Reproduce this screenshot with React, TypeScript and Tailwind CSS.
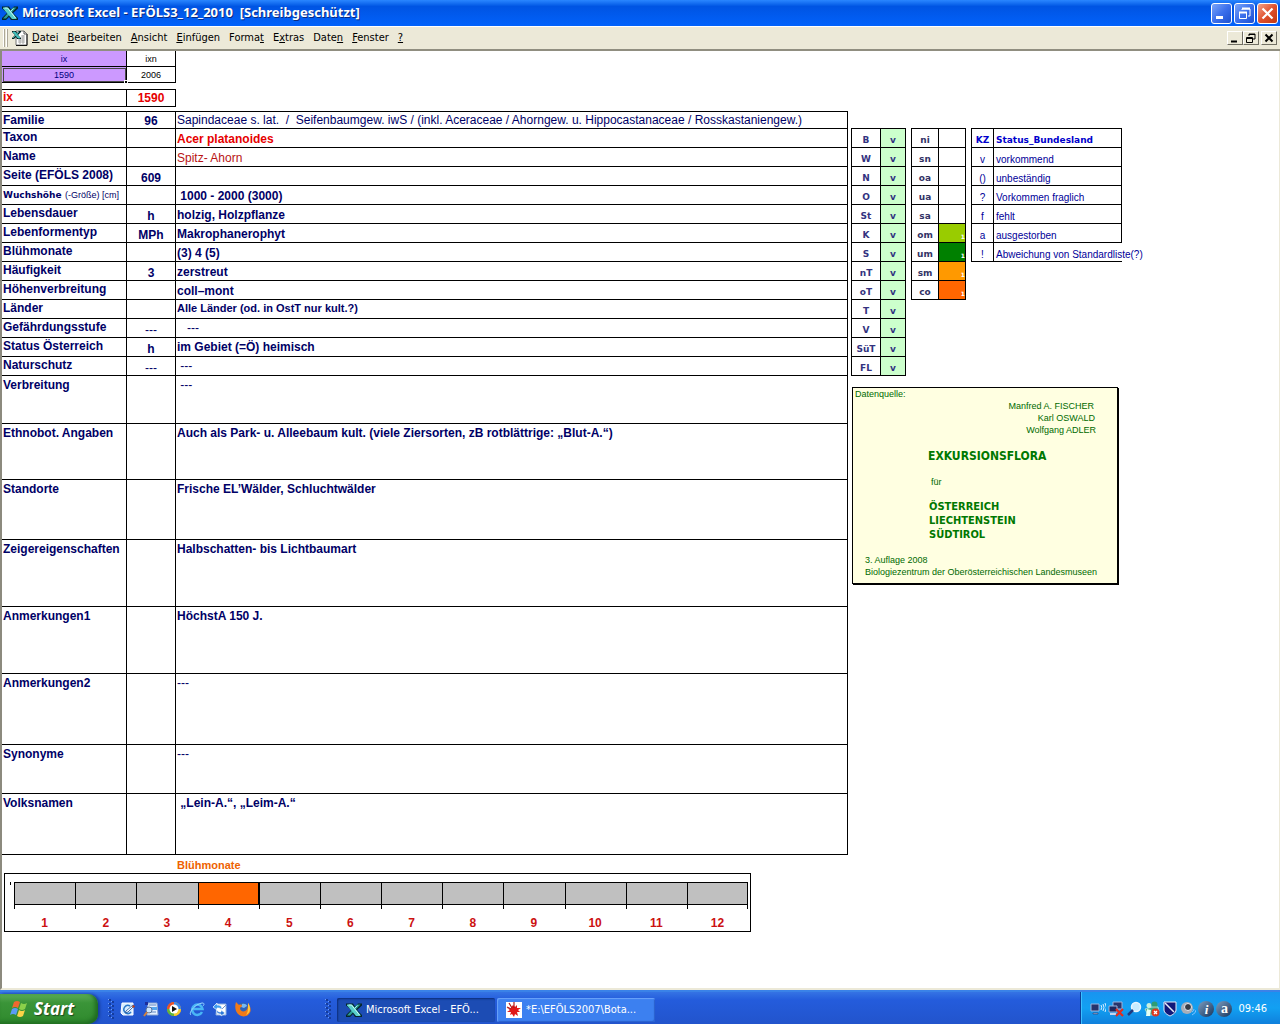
import type { ReactNode } from "react";

const ui = "font-['DejaVu_Sans_Condensed','Noto_Sans',sans-serif]";
const sideTable = "table-fixed border-separate border-spacing-0 border-t border-l border-black";
const sideCell = "border-r border-b border-black align-bottom";
const wideBold = "font-['DejaVu_Sans',sans-serif] text-[9px] leading-[13px] font-bold";

type Row = {
  label: ReactNode;
  code?: string;
  value?: ReactNode;
  height: string;
  valueClass?: string;
};

const single = "h-[19px]";
const bottom = "align-bottom font-bold";
const middle = "align-middle font-bold";
const top = "align-top pt-px font-bold";
const topPlain = "align-top pt-px font-normal";

const rows: Row[] = [
  {
    label: "Familie",
    code: "96",
    value: "Sapindaceae s. lat.  /  Seifenbaumgew. iwS / (inkl. Aceraceae / Ahorngew. u. Hippocastanaceae / Rosskastaniengew.)",
    height: "h-[17px]",
    valueClass: "align-bottom font-normal",
  },
  { label: "Taxon", value: "Acer platanoides", height: single, valueClass: "align-bottom font-bold text-[#e60000]" },
  { label: "Name", value: "Spitz- Ahorn", height: single, valueClass: "align-bottom font-normal text-[#b81414]" },
  { label: "Seite (EFÖLS 2008)", code: "609", height: single },
  {
    label: (
      <>
        <span className={wideBold}>Wuchshöhe</span> <span className="text-[9px] font-normal">(-Größe) [cm]</span>
      </>
    ),
    value: " 1000 - 2000 (3000)",
    height: single,
  },
  { label: "Lebensdauer", code: "h", value: "holzig, Holzpflanze", height: single },
  { label: "Lebenformentyp", code: "MPh", value: "Makrophanerophyt", height: single },
  { label: "Blühmonate", value: "(3) 4 (5)", height: single },
  { label: "Häufigkeit", code: "3", value: "zerstreut", height: single },
  { label: "Höhenverbreitung", value: "coll–mont", height: single },
  {
    label: "Länder",
    value: "Alle Länder (od. in OstT nur kult.?)",
    height: single,
    valueClass: "align-top font-bold text-[11px]",
  },
  { label: "Gefährdungsstufe", code: "---", value: "   ---", height: single, valueClass: "align-middle font-normal" },
  { label: "Status Österreich", code: "h", value: "im Gebiet (=Ö) heimisch", height: single, valueClass: middle },
  { label: "Naturschutz", code: "---", value: " ---", height: single, valueClass: "align-middle font-normal" },
  { label: "Verbreitung", value: " ---", height: "h-[48px]", valueClass: topPlain },
  {
    label: "Ethnobot. Angaben",
    value: "Auch als Park- u. Alleebaum kult. (viele Ziersorten, zB rotblättrige: „Blut-A.“)",
    height: "h-[56px]",
    valueClass: top,
  },
  { label: "Standorte", value: "Frische EL’Wälder, Schluchtwälder", height: "h-[60px]", valueClass: top },
  { label: "Zeigereigenschaften", value: "Halbschatten- bis Lichtbaumart", height: "h-[67px]", valueClass: top },
  { label: "Anmerkungen1", value: "HöchstA 150 J.", height: "h-[67px]", valueClass: top },
  { label: "Anmerkungen2", value: "---", height: "h-[71px]", valueClass: topPlain },
  { label: "Synonyme", value: "---", height: "h-[49px]", valueClass: topPlain },
  { label: "Volksnamen", value: " „Lein-A.“, „Leim-A.“", height: "h-[61px]", valueClass: top },
];

const regions = ["B", "W", "N", "O", "St", "K", "S", "nT", "oT", "T", "V", "SüT", "FL"];

const levels = [
  ["ni", ""],
  ["sn", ""],
  ["oa", ""],
  ["ua", ""],
  ["sa", ""],
  ["om", "bg-[#99cc00]"],
  ["um", "bg-[#008000]"],
  ["sm", "bg-[#ff9900]"],
  ["co", "bg-[#ff6600]"],
];

const legend = [
  ["v", "vorkommend"],
  ["()", "unbeständig"],
  ["?", "Vorkommen fraglich"],
  ["f", "fehlt"],
  ["a", "ausgestorben"],
];

const menus: [string, string, string][] = [
  ["", "D", "atei"],
  ["", "B", "earbeiten"],
  ["", "A", "nsicht"],
  ["", "E", "infügen"],
  ["Forma", "t", ""],
  ["E", "x", "tras"],
  ["Date", "n", ""],
  ["", "F", "enster"],
  ["", "?", ""],
];

function ExcelMark() {
  return (
    <svg viewBox="0 0 16 16" className="size-4 shrink-0" aria-hidden="true">
      <path d="M0 1.500h7l2 3 3-3h4v2l-5 4.500 5 5v2H9l-2-3-3 3H0v-2l5-5-5-4.500z" fill="#06262a" />
      <path d="M11 2.500h3.500L4 13.500H1z" fill="#2a9c98" />
      <path d="M1 2.500h5l8.500 10.500v1H10L1 3.500z" fill="#58cfca" />
      <path d="M2.500 3h3l8 10" fill="none" stroke="#c8fbf8" />
      <path d="M11.500 3.500L9 6" stroke="#a8ece8" />
    </svg>
  );
}

function WorkbookIcon() {
  return (
    <svg viewBox="0 0 16 16" className="size-4 shrink-0" aria-hidden="true">
      <path d="M4 1h8l3 3v11H4z" fill="#fff" stroke="#777" />
      <path d="M15 4v11.500H4" fill="none" stroke="#111" />
      <path d="M12 1v3h3" fill="none" stroke="#555" />
      <path d="M6 10h7M6 12h7M9 6h4M9 8h4M8 9v5M11 5v9" stroke="#9a9a9a" strokeWidth=".8" />
      <path d="M0 1h4l1 2 2-2h2v1L6 5l3 3v1H5L4 7 2 9H0V8l3-3-3-3z" fill="#052525" />
      <path d="M1 2h2l5 6H6zM7 2l-6 6" fill="#48c7c0" stroke="#48c7c0" strokeWidth=".8" />
    </svg>
  );
}

function TitleButton({ label, close, children }: { label: string; close?: boolean; children: ReactNode }) {
  return (
    <button
      type="button"
      aria-label={label}
      className={
        close
          ? "flex size-[21px] items-center justify-center rounded-[3px] border border-white bg-linear-to-br from-[#f0a088] via-[#e0502c] to-[#c03810]"
          : "flex size-[21px] items-center justify-center rounded-[3px] border border-white bg-linear-to-br from-[#7ca4f8] via-[#3c70ec] to-[#1c50d0]"
      }
    >
      <svg viewBox="0 0 19 19" className="size-[19px]" fill="none" stroke="#fff">
        {children}
      </svg>
    </button>
  );
}

function DocButton({ label, children }: { label: string; children: ReactNode }) {
  return (
    <button
      type="button"
      aria-label={label}
      className="h-[14px] w-4 border border-t-white border-r-[#716f64] border-b-[#716f64] border-l-white bg-[#ece9d8]"
    >
      <svg viewBox="0 0 14 12" className="h-3 w-[14px]" fill="none" stroke="#000">
        {children}
      </svg>
    </button>
  );
}

function TitleBar() {
  return (
    <header className="flex h-[26px] items-center bg-linear-to-b from-[#2a86ff] via-[#0054e3] via-25% to-[#0262fb] pr-[2px] pl-[2px]">
      <ExcelMark />
      <h1 className="flex-1 pl-1 font-['Noto_Sans','Open_Sans',sans-serif] text-[13px] font-bold whitespace-pre text-white [text-shadow:1px_1px_0_#0a2a80]">
        {"Microsoft Excel - EFÖLS3_12_2010  [Schreibgeschützt]"}
      </h1>
      <div className="flex gap-[2px]">
        <TitleButton label="Minimieren">
          <path d="M4 13.500h7" strokeWidth="3" />
        </TitleButton>
        <TitleButton label="Verkleinern">
          <path d="M7 6V5h8v7h-2" />
          <path d="M7 4.500h8" strokeWidth="2" />
          <path d="M4.500 8.500h7v6h-7z" />
          <path d="M4 8.500h8" strokeWidth="2" />
        </TitleButton>
        <TitleButton label="Schließen" close>
          <path d="M4.500 4.500l10 10M14.500 4.500l-10 10" strokeWidth="2.200" />
        </TitleButton>
      </div>
    </header>
  );
}

function MenuBar() {
  return (
    <nav className={`flex h-[25px] items-center border-t border-t-white border-b-2 border-b-[#908e80] bg-[#ece9d8] pr-[3px] pl-[3px] text-[11px] text-black ${ui}`}>
      <span className="mr-1 flex gap-px">
        <i className="h-[18px] w-[2px] border-l border-white bg-[#aca899]" />
        <i className="h-[18px] w-[2px] border-l border-white bg-[#aca899]" />
      </span>
      <WorkbookIcon />
      <div className="flex flex-1 gap-[9px] pl-1">
        {menus.map(([before, key, after]) => (
          <button type="button" key={before + key + after}>
            {before}
            <u>{key}</u>
            {after}
          </button>
        ))}
      </div>
      <div className="flex">
        <DocButton label="Mappe minimieren">
          <path d="M3 9.500h6" strokeWidth="2" />
        </DocButton>
        <DocButton label="Mappe wiederherstellen">
          <path d="M5 4V2h6v5H9M5 2.500h6" />
          <path d="M2.500 5.500h6v5h-6zM2.500 6.500h6" />
        </DocButton>
        <span className="w-[2px]" />
        <DocButton label="Mappe schließen">
          <path d="M3.500 2.500l7 7M10.500 2.500l-7 7" strokeWidth="2" />
        </DocButton>
      </div>
    </nav>
  );
}

function IndexTables() {
  return (
    <>
      <table className="w-[174px] table-fixed border-separate border-spacing-0 text-center text-[9px] leading-[14px]">
        <tbody>
          <tr className="h-4">
            <td className="w-[125px] border-r border-b border-black bg-[#cc99ff] text-[#000080]">ix</td>
            <td className="border-r border-b border-black text-black">ixn</td>
          </tr>
          <tr className="h-4">
            <td className="relative border-r border-b border-black bg-[#cc99ff] text-[#000080] outline-1 -outline-offset-2 outline-[#4a4a4a]">
              1590
              <i className="absolute -right-[2px] -bottom-[2px] size-1 border border-white bg-black" />
            </td>
            <td className="border-r border-b border-black text-black">2006</td>
          </tr>
        </tbody>
      </table>
      <table className="mt-[6px] w-[174px] table-fixed border-separate border-spacing-0 border-t border-black text-[#e60000]">
        <tbody>
          <tr className="h-[17px]">
            <th scope="row" className="w-[125px] border-r border-b border-black pl-px text-left align-top text-[12px] leading-[15px]">
              ix
            </th>
            <td className="border-r border-b border-black text-center text-[12px] leading-4 font-bold">1590</td>
          </tr>
        </tbody>
      </table>
    </>
  );
}

function SpeciesTable() {
  return (
    <table className="mt-1 w-full table-fixed border-separate border-spacing-0 border-t border-black text-[12px] text-[#000066]">
      <colgroup>
        <col className="w-[125px]" />
        <col className="w-[49px]" />
        <col />
      </colgroup>
      <tbody>
        {rows.map((row, i) => (
          <tr key={i} className={row.height}>
            <th
              scope="row"
              className={`border-r border-b border-black pl-px text-left align-top leading-4 font-bold whitespace-nowrap ${i > 13 ? "pt-px" : ""}`}
            >
              {row.label}
            </th>
            <td
              className={`border-r border-b border-black text-center align-bottom leading-[14px] ${row.code === "---" ? "font-normal" : "font-bold"}`}
            >
              {row.code}
            </td>
            <td className={`border-r border-b border-black pl-px leading-4 whitespace-pre ${row.valueClass ?? bottom}`}>{row.value}</td>
          </tr>
        ))}
      </tbody>
    </table>
  );
}

function MonthChart() {
  return (
    <section className="pl-[2px]">
      <h2 className="pt-[3px] pl-[173px] text-[11px] leading-[15px] font-bold text-[#ee6200]">Blühmonate</h2>
      <div className="flex h-[59px] w-full max-w-[747px] border border-black pt-2 pr-[2px] pl-[5px]">
        <i className="h-[3px] w-px bg-black" />
        <ol className="ml-[3px] grid flex-1 grid-cols-12 self-start">
          {Array.from({ length: 12 }, (_, i) => i + 1).map((month) => (
            <li key={month} className="text-center text-[12px] leading-4 font-bold text-[#cc1111]">
              <div
                className={`h-[23px] border-y border-l border-black ${month === 4 ? "border-r bg-[#ff6600]" : "bg-[#c0c0c0]"} ${month === 12 ? "border-r" : ""}`}
              />
              <div className={`h-1 border-l border-black ${month === 12 ? "border-r" : ""}`} />
              <div className="pt-[6px]">{month}</div>
            </li>
          ))}
        </ol>
      </div>
    </section>
  );
}

function RegionTable() {
  return (
    <table className={`w-[55px] ${sideTable} ${wideBold} text-center text-[#333380]`}>
      <tbody>
        {regions.map((region) => (
          <tr key={region} className="h-[19px]">
            <th scope="row" className={`w-[29px] ${sideCell}`}>{region}</th>
            <td className={`bg-[#ccffcc] ${sideCell}`}>v</td>
          </tr>
        ))}
      </tbody>
    </table>
  );
}

function LevelTable() {
  return (
    <table className={`w-[55px] ${sideTable} ${wideBold} text-center text-[#333366]`}>
      <tbody>
        {levels.map(([name, fill]) => (
          <tr key={name} className="h-[19px]">
            <th scope="row" className={`w-[27px] ${sideCell}`}>{name}</th>
            <td className={`text-right text-[6px] leading-[11px] text-white ${fill} ${sideCell}`}>{fill && "1"}</td>
          </tr>
        ))}
      </tbody>
    </table>
  );
}

function LegendTable() {
  return (
    <table className={`w-[151px] ${sideTable} text-[10px] leading-[13px] text-[#000099]`}>
      <thead>
        <tr className={`h-[19px] text-[#0000cc] ${wideBold}`}>
          <th scope="col" className={`w-[22px] ${sideCell}`}>KZ</th>
          <th scope="col" className={`pl-[2px] text-left ${sideCell}`}>Status_Bundesland</th>
        </tr>
      </thead>
      <tbody>
        {legend.map(([sign, meaning]) => (
          <tr key={sign} className="h-[19px]">
            <td className={`text-center ${sideCell}`}>{sign}</td>
            <td className={`pl-[2px] ${sideCell}`}>{meaning}</td>
          </tr>
        ))}
        <tr className="h-[19px]">
          <td className={`text-center ${sideCell}`}>!</td>
          <td className="border-b border-black pl-[2px] align-bottom whitespace-nowrap">Abweichung von Standardliste(?)</td>
        </tr>
      </tbody>
    </table>
  );
}

function SourceCard() {
  return (
    <aside className="w-[266px] border border-black bg-[#ffffe1] pb-[5px] text-[9px] leading-3 text-[#006a00] shadow-[1px_1px_0_#000]">
      <p className="pl-[2px]">Datenquelle:</p>
      <div className="pr-[21px] text-right">
        <p className="pr-[2px]">Manfred A. FISCHER</p>
        <p className="pr-px">Karl OSWALD</p>
        <p>Wolfgang ADLER</p>
      </div>
      <div className={`pt-[12px] pl-[75px] font-bold text-[#007800] ${ui}`}>
        <p className="text-[12px] leading-4">EXKURSIONSFLORA</p>
        <p className="py-[12px] pl-[3px] font-['Liberation_Sans',sans-serif] text-[9px] leading-3 font-normal text-[#006a00]">für</p>
        <p className="pl-px text-[11px] leading-[14px]">
          ÖSTERREICH
          <br />
          LIECHTENSTEIN
          <br />
          SÜDTIROL
        </p>
      </div>
      <div className="pt-[12px] pl-[12px]">
        <p>3. Auflage 2008</p>
        <p>Biologiezentrum der Oberösterreichischen Landesmuseen</p>
      </div>
    </aside>
  );
}

function Grip() {
  return (
    <svg viewBox="0 0 6 20" className="h-5 w-[6px] shrink-0" aria-hidden="true">
      {[0, 4, 8, 12, 16].map((y) => (
        <g key={y}>
          <path d={`M1 ${y}h2v2h-2zM4 ${y + 2}h2v2h-2z`} fill="#153c9c" />
          <path d={`M0 ${y}h1v1h-1zM3 ${y + 2}h1v1h-1z`} fill="#6b9cf5" />
        </g>
      ))}
    </svg>
  );
}

function Glyph({ children }: { children: ReactNode }) {
  return (
    <svg viewBox="0 0 16 16" className="size-4 shrink-0" aria-hidden="true">
      {children}
    </svg>
  );
}

const quickLaunch: [string, ReactNode][] = [
  [
    "Desktop anzeigen",
    <>
      <path d="M2 2h11v12H3L1 12z" fill="#d7ecff" stroke="#fff" />
      <path d="M10 5a4 4 0 1 0 1 6" fill="none" stroke="#2a78c8" strokeWidth="1.500" />
      <path d="M6 10l7-6 1 1-6 6-3 1z" fill="#fff" stroke="#174f98" strokeWidth=".8" />
      <path d="M13 4l2 1-1 2-2-1z" fill="#b04020" />
    </>,
  ],
  [
    "Suche",
    <>
      <path d="M5 2h9l1 12H4z" fill="#e6f0ff" stroke="#8aa4d0" />
      <path d="M6 4h7M6 11h7" stroke="#5f87c4" />
      <path d="M6 6h8v3H6z" fill="#58a8ef" />
      <circle cx="6" cy="9" r="3" fill="#cce6ff" stroke="#5b7199" />
      <path d="M4 11l-3 4" stroke="#d0803c" strokeWidth="2" />
      <path d="M2 1h3v3H2z" fill="#1c2f9c" />
    </>,
  ],
  [
    "Media Player",
    <>
      <circle cx="8" cy="8" r="7" fill="#f28a1c" />
      <path d="M8 8V1a7 7 0 0 0-7 7z" fill="#e8502a" />
      <path d="M8 8V1a7 7 0 0 1 7 7z" fill="#3c8be8" />
      <path d="M8 8H1a7 7 0 0 0 7 7z" fill="#5cb83c" />
      <path d="M8 8h7a7 7 0 0 1-7 7z" fill="#f6cc30" />
      <circle cx="8" cy="8" r="4.500" fill="#fff" />
      <path d="M6 5l5 3-5 3z" fill="#111" />
    </>,
  ],
  [
    "Internet Explorer",
    <>
      <path d="M13 11a5.200 5.200 0 1 1 .5-3H4" fill="none" stroke="#49b6f5" strokeWidth="2.500" />
      <path d="M2 14C-1 12 6 3 13 2c3 0 2 2 1 3" fill="none" stroke="#9ad9ff" />
    </>,
  ],
  [
    "Outlook Express",
    <>
      <path d="M5 3h9v11H4z" fill="#fff" stroke="#8fb0df" />
      <path d="M6 4l4 4 4-4" fill="none" stroke="#6b8fc8" />
      <path d="M1 6l4-4v2c4 0 6 2 4 5 0-2-2-2-4-2v2z" fill="#3f9cf0" stroke="#fff" strokeWidth=".7" />
      <path d="M13 12l-4 3v-2c-3 0-5-1-4-4 1 2 2 2 4 2V9z" fill="#2c78d8" stroke="#fff" strokeWidth=".6" />
    </>,
  ],
  [
    "Firefox",
    <>
      <circle cx="8" cy="8" r="6.500" fill="#2c62b8" />
      <path d="M7 3c3-1 5 1 5 2l-3 2-3-1z" fill="#79b9f0" />
      <path d="M1 1l3 3c2-1 3 0 3 1L5 7c0 3 3 4 5 3 3-1 3-5 3-8 3 4 4 9 0 12-4 3-10 1-12-4C0 7 0 4 1 1z" fill="#f07a18" />
      <path d="M13 2c3 4 3 10-2 12 2-3 2-5 2-8z" fill="#ffc93c" />
    </>,
  ],
];

const trayIcons: ReactNode[] = [
  <>
    <path d="M1 3h8v7H1z" fill="#27346b" stroke="#9cb4dd" />
    <path d="M3 12h5v1H3z" fill="#c4d4f0" stroke="#2a3870" strokeWidth=".6" />
    <path d="M11 4q1.500 2 0 5M13 3q2 3.500 0 7M15 2q3 5 0 9" fill="none" stroke="#d6ecff" />
  </>,
  <>
    <path d="M5 1h9v7H5z" fill="#27346b" stroke="#9cb4dd" />
    <path d="M1 5h8v6H1z" fill="#1b2860" stroke="#9cb4dd" />
    <path d="M2 13h6" stroke="#c4d4f0" strokeWidth="2" />
    <path d="M8 8l7 7M15 8l-7 7" stroke="#e22c1c" strokeWidth="2.200" />
  </>,
  <>
    <circle cx="10" cy="6" r="4.500" fill="#c6ecff" stroke="#e8f6ff" strokeWidth="1.500" />
    <path d="M7 9l-5 5" stroke="#203a80" strokeWidth="2.500" />
  </>,
  <>
    <circle cx="5" cy="4.500" r="2.500" fill="#c8f0dc" />
    <circle cx="10.500" cy="3.500" r="3" fill="#2f9c74" />
    <path d="M1 8l4-1 3-1h6l1 4-4 4H4z" fill="#3fa884" stroke="#e5fff3" strokeWidth=".6" />
    <path d="M3 8l4 1-1 6H2z" fill="#e5fff3" />
    <circle cx="11.500" cy="11.500" r="4" fill="#dc3a20" />
    <path d="M10 10l3 3M13 10l-3 3" stroke="#fff" strokeWidth="1.300" />
  </>,
  <>
    <path d="M2 1h12v8c0 3-4 5-6 6-2-1-6-3-6-6z" fill="#10187a" stroke="#e8ecf8" />
    <path d="M3 2l9 9" stroke="#e8ecf8" strokeWidth="1.500" />
  </>,
  <>
    <circle cx="7" cy="7" r="6" fill="#a8aeb8" />
    <circle cx="8" cy="6" r="3.500" fill="#353b45" stroke="#e6eaf2" />
    <path d="M12 11q2-1 2-3M12 14q4-2 4-5" fill="none" stroke="#7fc2ff" />
  </>,
];

function Taskbar() {
  return (
    <footer className={`flex h-[34px] items-stretch border-t-2 border-[#3a82e8] bg-linear-to-b from-[#3573e4] via-[#245cdc] via-25% to-[#2254cc] text-[11px] text-white ${ui}`}>
      <button
        type="button"
        className="mt-[2px] flex w-[98px] items-center gap-[6px] rounded-r-[10px] bg-linear-to-b from-[#5aac56] via-[#3a9438] via-30% to-[#2f8a2d] pl-[10px] font-['Open_Sans','Noto_Sans',sans-serif] text-[17px] font-bold italic shadow-[inset_-3px_-2px_4px_#1f6a20,2px_0_3px_#173c98] [text-shadow:1px_1px_1px_#1c4a1c]"
      >
        <svg viewBox="0 0 18 18" className="size-[18px]" aria-hidden="true">
          <path d="M4 2q3-2 6 0L8 8Q5 6 2 8z" fill="#f06830" />
          <path d="M11 3q3 2 6 0l-2 6q-3 2-6 0z" fill="#8bd04a" />
          <path d="M2 9q3-2 6 0l-2 6q-3-2-6 0z" fill="#5b9cf5" />
          <path d="M9 10q3 2 6 0l-2 6q-3 2-6 0z" fill="#fbd348" />
        </svg>
        Start
      </button>
      <div className="flex w-[239px] items-center pt-[2px] pl-[10px]">
        <Grip />
        <div className="flex flex-1 gap-[7px] pl-[6px]">
          {quickLaunch.map(([name, art]) => (
            <button type="button" key={name} aria-label={name}>
              <Glyph>{art}</Glyph>
            </button>
          ))}
        </div>
        <span className="pr-[6px]">
          <Grip />
        </span>
      </div>
      <div className="flex flex-1 gap-[2px] pt-[6px] pb-[2px]">
        <button type="button" className="flex w-[158px] items-center gap-1 rounded-[2px] bg-[#1c4cb4] pl-[9px] shadow-[inset_1px_1px_2px_#0c2c78]">
          <ExcelMark />
          <span>Microsoft Excel - EFÖ...</span>
        </button>
        <button type="button" className="flex w-[158px] items-center gap-1 rounded-[2px] bg-[#3c80f0] pl-[9px] shadow-[inset_1px_1px_1px_#6ba4fa,inset_-1px_-1px_1px_#2a60cc]">
          <Glyph>
            <path d="M0 0h16v16H0z" fill="#fff" />
            <path d="M7 3l2 2 2-2v3l4 0-3 2 2 2h-3l1 4-3-2-1 3-2-3-2 1 1-3-4 0 3-2-3-2 3 1z" fill="#e01818" />
            <path d="M3 1l3 5M8 0v6M1 5l4 2" stroke="#b01818" strokeWidth="1.200" />
          </Glyph>
          <span>*E:\EFÖLS2007\Bota...</span>
        </button>
      </div>
      <div className="flex items-center gap-[2px] border-l border-[#0c3c98] bg-linear-to-b from-[#1894f0] via-[#12a0f2] to-[#1080dc] pt-[2px] pr-[13px] pl-[9px] shadow-[inset_1px_0_0_#3cc0ff]">
        {trayIcons.map((art, i) => (
          <Glyph key={i}>{art}</Glyph>
        ))}
        <span className="flex size-4 items-center justify-center rounded-full bg-linear-to-br from-[#7f9fc0] to-[#16365e] font-['Liberation_Serif',serif] text-[13px] leading-none font-bold italic">i</span>
        <span className="flex size-4 items-center justify-center rounded-full bg-linear-to-br from-[#7f9fc0] to-[#16365e] font-['Liberation_Serif',serif] text-[14px] leading-none font-bold">a</span>
        <time className="pl-1">09:46</time>
      </div>
    </footer>
  );
}

export default function App() {
  return (
    <div className="flex min-h-screen flex-col bg-white font-['Liberation_Sans',Arial,sans-serif]">
      <TitleBar />
      <MenuBar />
      <main className="flex flex-1 border-r border-b-2 border-l-2 border-r-[#ece9d8] border-b-[#ece9d8] border-l-[#8c8a7e]">
        <div className="min-w-0 flex-1">
          <IndexTables />
          <SpeciesTable />
          <MonthChart />
        </div>
        <div className="w-[431px] shrink-0 pt-[77px] pl-[3px]">
          <div className="flex items-start gap-[5px]">
            <RegionTable />
            <LevelTable />
            <LegendTable />
          </div>
          <div className="pt-[11px] pl-px">
            <SourceCard />
          </div>
        </div>
      </main>
      <Taskbar />
    </div>
  );
}
